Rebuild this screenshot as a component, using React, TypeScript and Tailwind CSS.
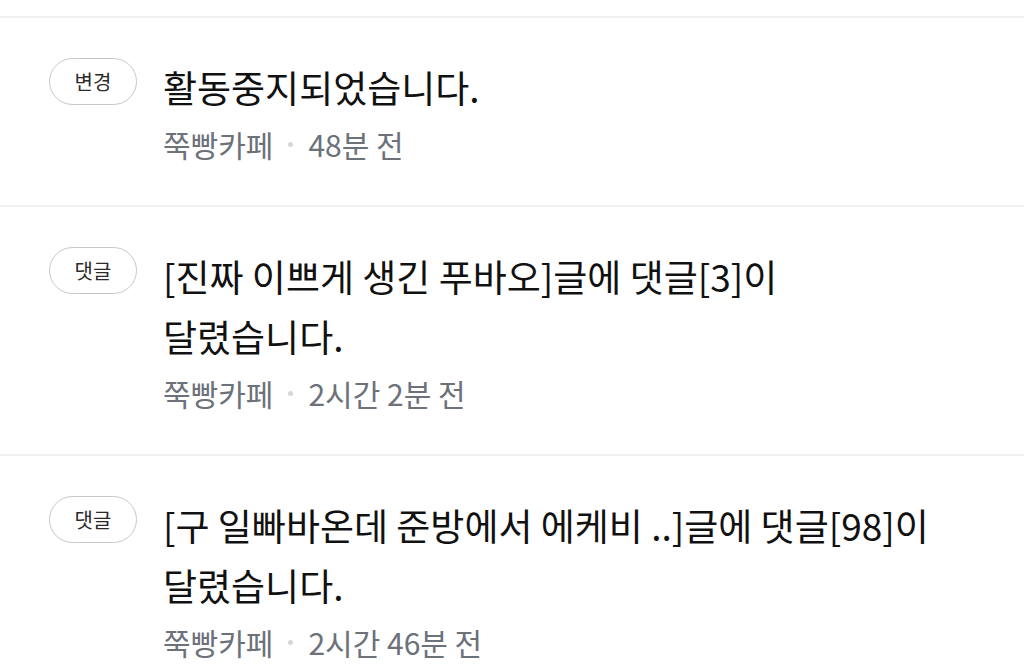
import React from "react";

type Item = { badge: string; title: string; time: string };

const items: Item[] = [
  { badge: "변경", title: "활동중지되었습니다.", time: "48분 전" },
  { badge: "댓글", title: "[진짜 이쁘게 생긴 푸바오]글에 댓글[3]이 달렸습니다.", time: "2시간 2분 전" },
  { badge: "댓글", title: "[구 일빠바온데 준방에서 에케비 ..]글에 댓글[98]이 달렸습니다.", time: "2시간 46분 전" },
];

export default function App() {
  return (
    <div
      className="w-[1024px] h-[666px] overflow-hidden bg-white"
      style={{ fontFamily: '"Noto Sans CJK KR", "Noto Sans", sans-serif' }}
    >
      <div className="h-[16px]" />
      {items.map((it, i) => (
        <div key={i} className="border-t-2 border-[#f0f0f0] flex items-start pl-[49px] pr-[64px] pt-[39px] pb-[41px]">
          <div className="mt-[1px] w-[88px] h-[47px] shrink-0 rounded-full border border-[#c8c8c8] flex items-center justify-center text-[20px] text-[#2a2a2a] leading-none">
            {it.badge}
          </div>
          <div className="ml-[26px] flex-1 min-w-0">
            <div className="text-[37px] leading-[60px] text-[#111] break-keep">{it.title}</div>
            <div className="mt-[7px] flex items-center h-[40px] text-[30px] text-[#6c717a]">
              <span>쭉빵카페</span>
              <span className="mx-[15px] w-[5px] h-[5px] rounded-full bg-[#d6d6d6]" />
              <span>{it.time}</span>
            </div>
          </div>
        </div>
      ))}
    </div>
  );
}
